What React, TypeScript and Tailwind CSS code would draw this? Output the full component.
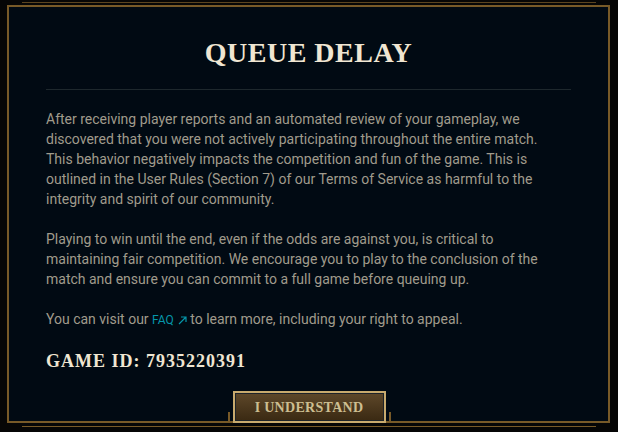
import React from 'react';

const paragraphs = [
  [
    'After receiving player reports and an automated review of your gameplay, we',
    'discovered that you were not actively participating throughout the entire match.',
    'This behavior negatively impacts the competition and fun of the game. This is',
    'outlined in the User Rules (Section 7) of our Terms of Service as harmful to the',
    'integrity and spirit of our community.',
  ],
  [
    'Playing to win until the end, even if the odds are against you, is critical to',
    'maintaining fair competition. We encourage you to play to the conclusion of the',
    'match and ensure you can commit to a full game before queuing up.',
  ],
];

const serif = { fontFamily: '"Liberation Serif", "DejaVu Serif", serif' };
const sans = { fontFamily: 'Roboto, "Liberation Sans", sans-serif' };

const App = () => {
  return (
    <div className="relative w-[618px] h-[432px] overflow-hidden bg-[#060606]">
      {/* back plate lines */}
      <div className="absolute left-[22px] right-[22px] top-[2px] h-px bg-[#5c4520]" />
      <div className="absolute left-[22px] right-[22px] top-[426px] h-px bg-[#785a28]" />

      {/* dialog frame */}
      <div className="ml-[7px] mt-[5px] w-[603px] h-[418px] border-2 border-[#785a28] bg-[#010a13] px-[37px] pt-[29px]">
        <h1
          className="text-center text-[28px] leading-[34px] font-bold tracking-[0.5px] text-[#f0e6d2]"
          style={serif}
        >
          QUEUE DELAY
        </h1>
        <div className="mt-[19px] h-px bg-[#1e282d]" />

        <div className="mt-[19px] text-[14px] leading-[20px] text-[#a09b8c]" style={sans}>
          {paragraphs.map((lines, i) => (
            <p key={i} className="mb-[20px]">
              {lines.map((l, j) => (
                <React.Fragment key={j}>
                  {l}
                  {j < lines.length - 1 && <br />}
                </React.Fragment>
              ))}
            </p>
          ))}
          <p>
            You can visit our{' '}
            <span className="inline-flex items-center gap-[4px] text-[12px] text-[#0596aa]">
              FAQ
              <svg width="9" height="9" viewBox="0 0 9 9" fill="none" stroke="currentColor" strokeWidth="1.2">
                <path d="M1 8 L8 1 M3 1 H8 V6" />
              </svg>
            </span>{' '}
            to learn more, including your right to appeal.
          </p>
        </div>

        <div
          className="mt-[19px] text-[18px] leading-[24px] font-bold tracking-[1px] text-[#f0e6d2]"
          style={serif}
        >
          GAME ID: 7935220391
        </div>
      </div>

      {/* button sitting over the frame's bottom edge */}
      <div className="absolute left-0 right-0 top-[391px] flex items-end justify-center gap-[3px]">
        <div className="w-[2px] h-[11px] bg-[#785a28]" />
        <button className="w-[153px] h-[32px] border-2 border-[#c8aa6e] bg-[#1e2328] p-px">
          <div
            className="flex h-full w-full items-center justify-center bg-gradient-to-b from-[#5d4729] to-[#3b2a13] text-[14px] font-bold tracking-[0.3px] text-[#cdbe91]"
            style={serif}
          >
            I UNDERSTAND
          </div>
        </button>
        <div className="w-[2px] h-[11px] bg-[#785a28]" />
      </div>
    </div>
  );
};

export default App;
